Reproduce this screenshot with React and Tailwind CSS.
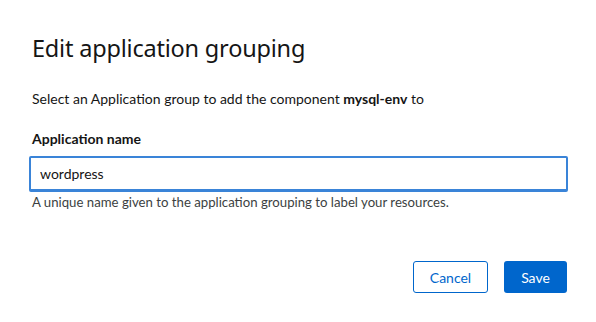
import React, { useState } from 'react';

export default function App() {
  const [name, setName] = useState('wordpress');

  return (
    <div className="w-[596px] h-[322px] bg-white text-[#151515]" style={{ fontFamily: 'Lato, sans-serif' }}>
      <div className="px-8 pt-[30px]">
        <h1 className="text-[23.5px] leading-[36px] font-normal tracking-[-0.2px]" style={{ fontFamily: '"Noto Sans", sans-serif' }}>
          Edit application grouping
        </h1>
        <p className="mt-[22px] text-[14px] leading-[21px]">
          Select an Application group to add the component <b className="font-bold">mysql-env</b> to
        </p>
        <label className="block mt-[19px] text-[14px] leading-[21px] font-bold">Application name</label>
        <div className="mt-[7px] -ml-[3px] w-[539px]">
          <input
            className="w-full h-[36px] px-[9px] text-[14px] border-2 border-b-[3px] border-[#3a84d8] rounded-[2px] outline-none"
            value={name}
            onChange={e => setName(e.target.value)}
          />
        </div>
        <p className="text-[13.2px] leading-[21px] text-[#3c3f42]">
          A unique name given to the application grouping to label your resources.
        </p>
        <div className="mt-[48px] -mr-[3px] flex justify-end gap-4">
          <button className="h-[32px] w-[75px] rounded-[3px] border border-[#0066cc] text-[#0066cc] text-[14px]">Cancel</button>
          <button className="h-[32px] w-[63px] rounded-[3px] bg-[#0066cc] text-white text-[14px]">Save</button>
        </div>
      </div>
    </div>
  );
}
